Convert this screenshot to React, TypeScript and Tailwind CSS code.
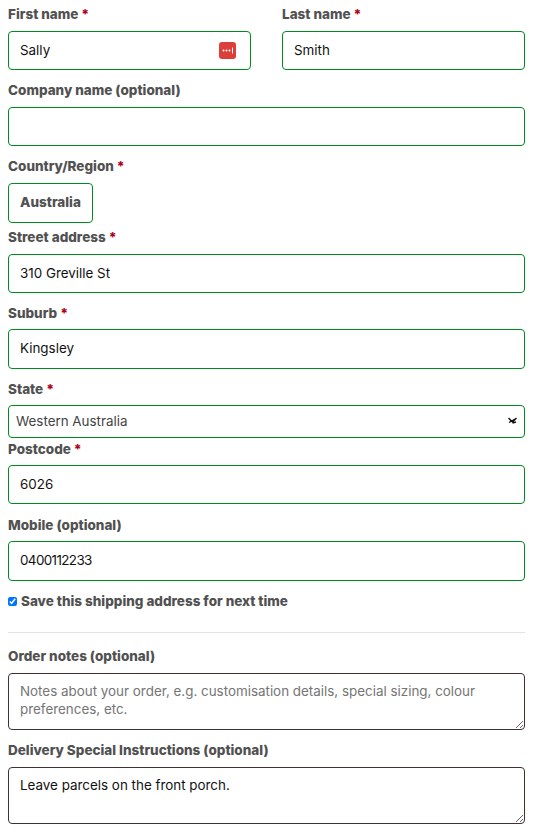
const font = "font-['Inter','Open_Sans',sans-serif]";

function Label({ text, required, low }: { text: string; required?: boolean; low?: boolean }) {
  return (
    <label className={`block h-[21.5px] text-[13.5px] font-extrabold text-[#515151] ${low ? "leading-[23.5px]" : "leading-[21.5px]"}`}>
      {text}
      {required && <span className="text-[#b00020]"> *</span>}
    </label>
  );
}

function Field({ label, required, value, low, className = "", valueClass = "pb-[2px]" }: { label: string; required?: boolean; value?: string; low?: boolean; className?: string; valueClass?: string }) {
  return (
    <div className={className}>
      <Label text={label} required={required} low={low} />
      <input
        defaultValue={value}
        className={`mt-[5.5px] block h-[39.2px] w-full rounded-[4px] border border-[#008a20] bg-white px-[11px] text-[13.4px] text-[#111] outline-none ${valueClass}`}
      />
    </div>
  );
}

function PasswordIcon() {
  return (
    <svg width="17" height="17" viewBox="0 0 17 17" className="absolute right-[15px] top-[38px]">
      <rect width="17" height="17" rx="3" fill="#dc3f39" />
      <circle cx="4.5" cy="8.5" r="1" fill="#fff" />
      <circle cx="7.5" cy="8.5" r="1" fill="#fff" />
      <circle cx="10.5" cy="8.5" r="1" fill="#fff" />
      <rect x="13" y="5.5" width="1" height="6" fill="#fff" />
    </svg>
  );
}

export default function App() {
  return (
    <form className={`${font} h-[834px] w-[533px] overflow-hidden bg-white px-[8px] pt-[4px]`}>
      <div className="flex gap-[31px]">
        <div className="relative w-[243px]">
          <Field label="First name" required value="Sally" />
          <PasswordIcon />
        </div>
        <Field label="Last name" required value="Smith" className="w-[243px]" />
      </div>
      <Field label="Company name (optional)" className="mt-[9.5px]" />

      <div className="mt-[10px]">
        <Label text="Country/Region" required />
        <div className="mt-[5.5px] flex h-[40px] w-[85px] items-center justify-center rounded-[4px] border border-[#008a20] pb-[2px] text-[13.5px] font-extrabold text-[#515151]">
          Australia
        </div>
      </div>

      <Field label="Street address" required value="310 Greville St" className="mt-[4.1px]" />
      <Field label="Suburb" required low value="Kingsley" valueClass="pb-[1px]" className="mt-[9.2px]" />

      <div className="relative mt-[9.4px]">
        <Label text="State" required low />
        <select className="mt-[5.5px] block h-[33px] w-full appearance-none rounded-[4px] border border-[#008a20] bg-white px-[7px] pb-[1px] text-[13.4px] text-[#444] outline-none">
          <option>Western Australia</option>
        </select>
        <svg width="9" height="7" viewBox="0 0 9 7" className="absolute right-[8px] top-[39px]">
          <path d="M0.5 1 L4.5 5 L8.5 1 M1 5.5 L8 1.5 M4.5 6 L8 5" stroke="#111" strokeWidth="1.4" fill="none" />
        </svg>
      </div>

      <Field label="Postcode" required low value="6026" valueClass="pb-[1px]" />
      <Field label="Mobile (optional)" low value="0400112233" valueClass="tracking-[-0.6px] h-[40px] pb-[2px]" className="mt-[9.5px]" />

      <label className="mt-[10.5px] flex h-[21px] items-center text-[13.5px] font-extrabold text-[#515151]">
        <input type="checkbox" defaultChecked className="mr-[4px] h-[9px] w-[9px] accent-[#0075ff]" />
        Save this shipping address for next time
      </label>

      <hr className="mt-[19.5px] border-[#e2e2e2]" />

      <div className="mt-[13px]">
        <Label text="Order notes (optional)" />
        <textarea
          placeholder="Notes about your order, e.g. customisation details, special sizing, colour preferences, etc."
          className="mt-[5.5px] block h-[57px] w-full rounded-[4px] border border-[#43302e] bg-white px-[11px] pt-[8px] pb-[6px] text-[13.4px] leading-[18.5px] text-[#111] outline-none placeholder:text-[#757575]"
        />
      </div>
      <div className="mt-[10px]">
        <Label text="Delivery Special Instructions (optional)" />
        <textarea
          defaultValue="Leave parcels on the front porch."
          className="mt-[5.5px] block h-[57px] w-full rounded-[4px] border border-[#43302e] bg-white px-[11px] pt-[8px] pb-[6px] text-[13.4px] leading-[18.5px] text-[#111] outline-none"
        />
      </div>
    </form>
  );
}
